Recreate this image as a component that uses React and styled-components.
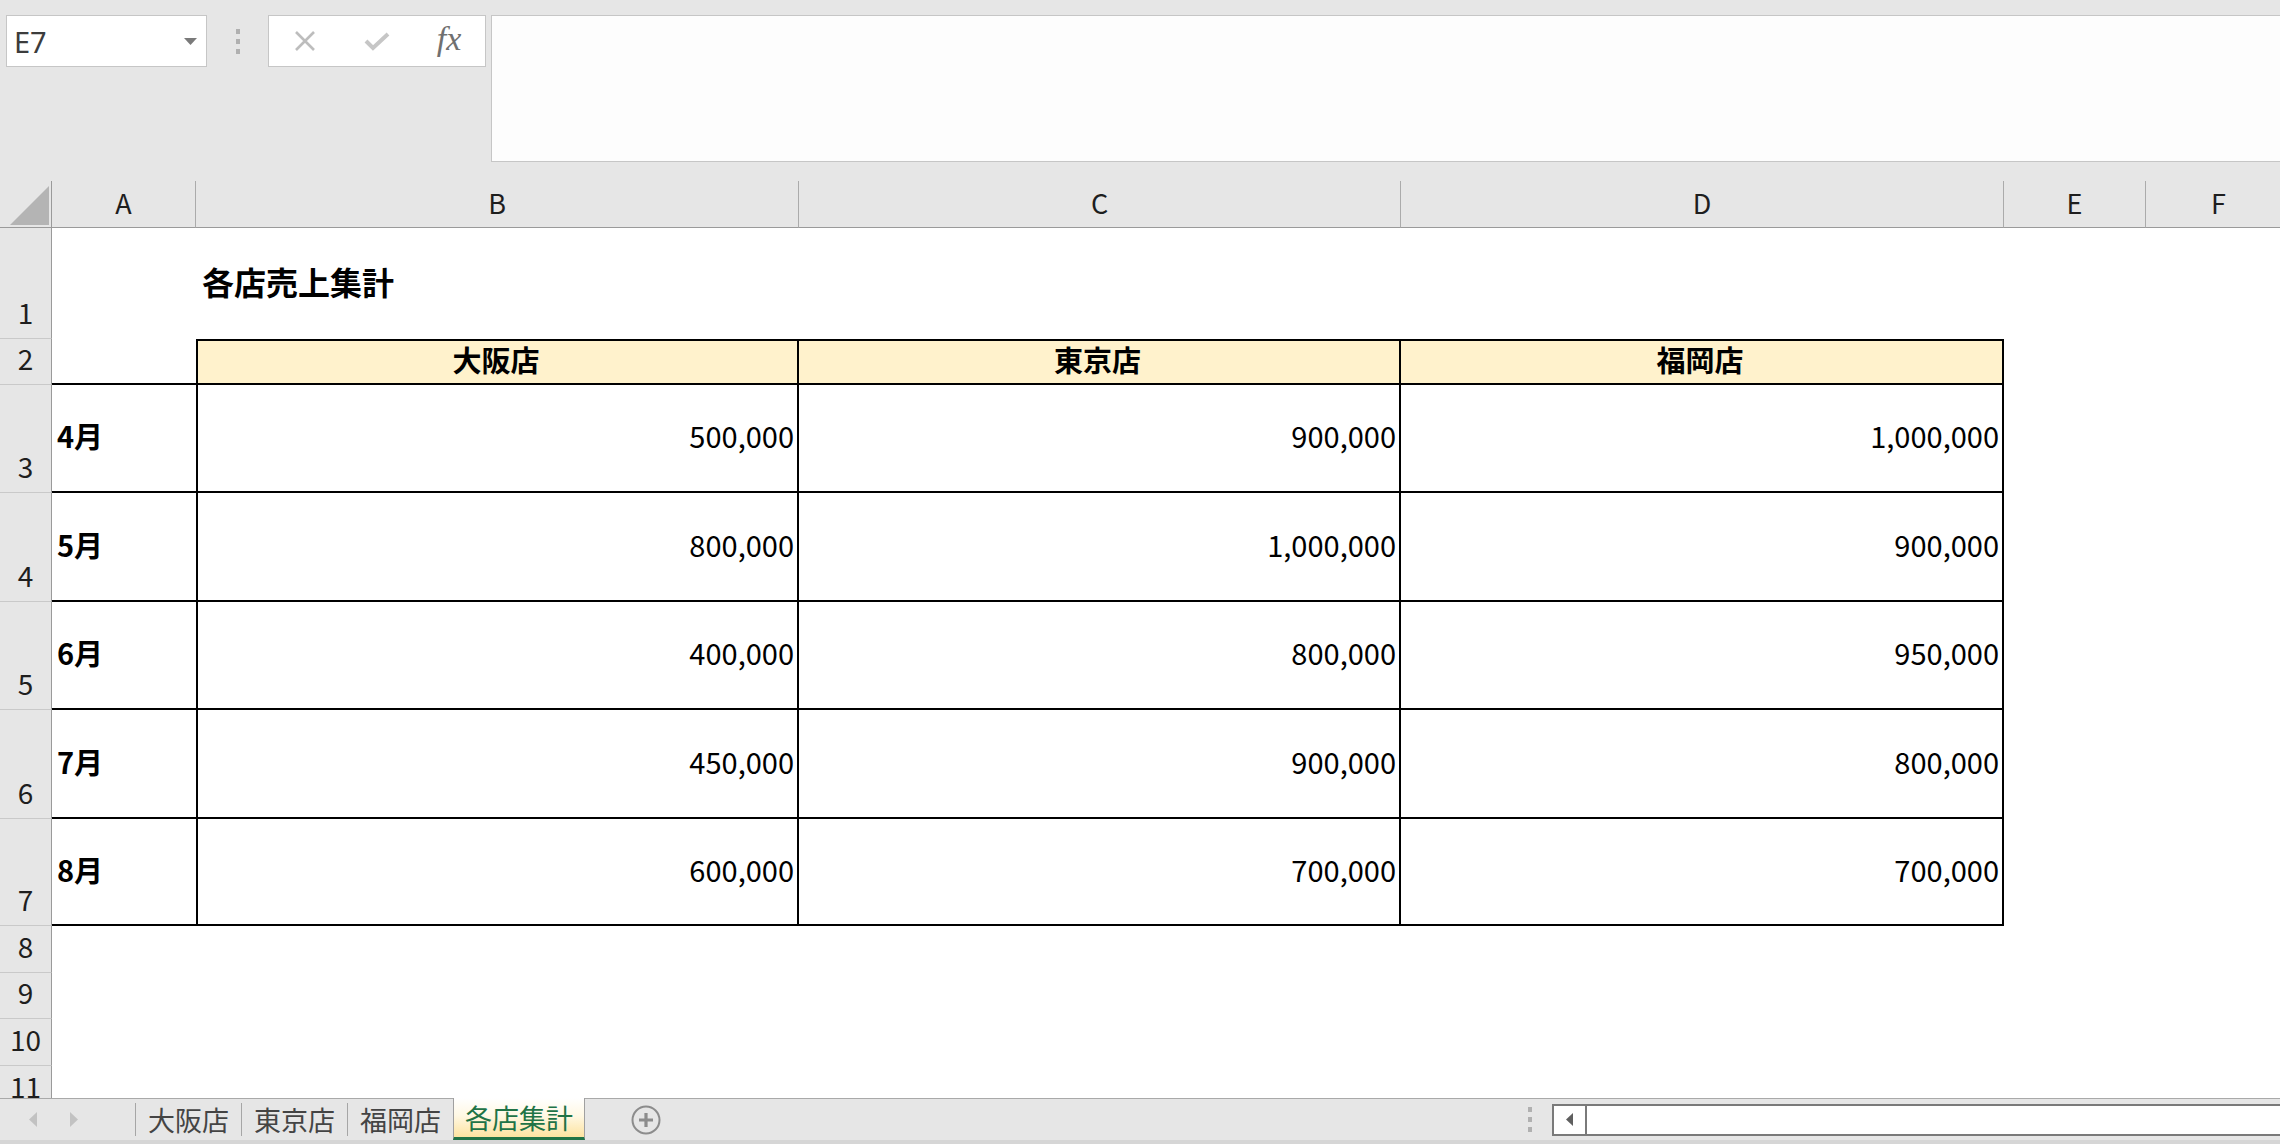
import React from "react";
import styled, { createGlobalStyle } from "styled-components";

const GlobalStyle = createGlobalStyle`
  html, body {
    margin: 0;
    padding: 0;
    background: #e6e6e6;
  }
  body {
    font-family: "Noto Sans CJK JP", "Noto Sans", sans-serif;
  }
`;

// column widths after the row header (A..F) and row heights (1..11)
const COLS = [144, 603, 602, 603, 142, 146];
const ROWS = [111, 46, 108, 109, 108, 109, 107, 47, 46, 47, 47];
const LETTERS = ["A", "B", "C", "D", "E", "F"];

const stores = ["大阪店", "東京店", "福岡店"];
const sales = [
  { month: "4月", values: ["500,000", "900,000", "1,000,000"] },
  { month: "5月", values: ["800,000", "1,000,000", "900,000"] },
  { month: "6月", values: ["400,000", "800,000", "950,000"] },
  { month: "7月", values: ["450,000", "900,000", "800,000"] },
  { month: "8月", values: ["600,000", "700,000", "700,000"] },
];
const sheets = ["大阪店", "東京店", "福岡店"];

const LINE = "2px solid #000";

const App = () => {
  const renderRow = (r) => {
    const cells = [];
    if (r === 1) {
      cells.push(<Cell key="a" />);
      cells.push(
        <Cell key="b" $bold $size={32} $padLeft={6}>
          各店売上集計
        </Cell>
      );
      for (let i = 0; i < 4; i++) cells.push(<Cell key={`e${i}`} />);
    } else if (r === 2) {
      cells.push(<Cell key="a" $b />);
      stores.forEach((s, i) => {
        cells.push(
          <Cell key={s} $fill="#fff2cc" $bold $align="center" $t $b $r $l={i === 0}>
            {s}
          </Cell>
        );
      });
      cells.push(<Cell key="e" />);
      cells.push(<Cell key="f" />);
    } else if (r >= 3 && r <= 7) {
      const row = sales[r - 3];
      cells.push(
        <Cell key="a" $bold $b $padLeft={5}>
          {row.month}
        </Cell>
      );
      row.values.forEach((v, i) => {
        cells.push(
          <Cell key={i} $align="right" $b $r $l={i === 0}>
            {v}
          </Cell>
        );
      });
      cells.push(<Cell key="e" />);
      cells.push(<Cell key="f" />);
    } else {
      for (let i = 0; i < 6; i++) cells.push(<Cell key={`x${i}`} />);
    }
    return [
      <RowHead key={`h${r}`}>{r}</RowHead>,
      ...cells.map((c, i) => React.cloneElement(c, { key: `${r}-${i}` })),
    ];
  };

  return (
    <Page>
      <GlobalStyle />
      <FormulaArea>
        <NameBox>
          <span>E7</span>
          <svg width="13" height="7" viewBox="0 0 13 7">
            <path d="M0 0 H13 L6.5 7 Z" fill="#7a7a7a" />
          </svg>
        </NameBox>
        <Grip>
          <Dot />
          <Dot />
          <Dot />
        </Grip>
        <FxButtons>
          <FxSlot>
            <svg width="24" height="20" viewBox="0 0 24 20">
              <path d="M3 1 L21 19 M21 1 L3 19" stroke="#bdbdbd" strokeWidth="2.6" />
            </svg>
          </FxSlot>
          <FxSlot>
            <svg width="26" height="20" viewBox="0 0 26 20">
              <path d="M2 10 L9 17 L24 3" stroke="#c6c6c6" strokeWidth="4" fill="none" />
            </svg>
          </FxSlot>
          <FxSlot>
            <FxText>fx</FxText>
          </FxSlot>
        </FxButtons>
        <FormulaInput />
      </FormulaArea>

      <Sheet>
        <Corner>
          <svg width="39" height="39" viewBox="0 0 39 39">
            <path d="M0 39 H39 V0 Z" fill="#b4b4b4" />
          </svg>
        </Corner>
        {LETTERS.map((l) => (
          <ColHead key={l}>{l}</ColHead>
        ))}
        {ROWS.map((_, i) => renderRow(i + 1))}
      </Sheet>

      <TabBar>
        <NavArrows>
          <svg width="8" height="15" viewBox="0 0 8 15">
            <path d="M8 0 V15 L0 7.5 Z" fill="#c2c2c2" />
          </svg>
          <svg width="8" height="15" viewBox="0 0 8 15">
            <path d="M0 0 V15 L8 7.5 Z" fill="#c2c2c2" />
          </svg>
        </NavArrows>
        {sheets.map((s) => (
          <React.Fragment key={s}>
            <TabDivider />
            <SheetTab>{s}</SheetTab>
          </React.Fragment>
        ))}
        <ActiveTab>各店集計</ActiveTab>
        <AddSheet>
          <svg width="30" height="30" viewBox="0 0 30 30">
            <circle cx="15" cy="15" r="13.5" stroke="#8c8c8c" strokeWidth="2" fill="none" />
            <path d="M15 8 V22 M8 15 H22" stroke="#8c8c8c" strokeWidth="3.2" />
          </svg>
        </AddSheet>
        <RightGroup>
          <Grip $small>
            <Dot />
            <Dot />
            <Dot />
          </Grip>
          <HScroll>
            <ScrollBtn>
              <svg width="7" height="13" viewBox="0 0 7 13">
                <path d="M7 0 V13 L0 6.5 Z" fill="#5f5f5f" />
              </svg>
            </ScrollBtn>
          </HScroll>
        </RightGroup>
      </TabBar>
    </Page>
  );
};

const Page = styled.div`
  width: 100vw;
  height: 100vh;
  overflow: hidden;
  display: flex;
  flex-direction: column;
  background: #e6e6e6;
  font-family: "Noto Sans CJK JP", "Noto Sans", sans-serif;
  color: #000;
`;

/* ---------- formula bar ---------- */
const FormulaArea = styled.div`
  flex: 0 0 181px;
  box-sizing: border-box;
  display: flex;
  align-items: flex-start;
  padding: 15px 0 0 6px;
`;

const NameBox = styled.div`
  flex: 0 0 201px;
  height: 52px;
  box-sizing: border-box;
  background: #fff;
  border: 1px solid #c6c6c6;
  display: flex;
  align-items: center;
  justify-content: space-between;
  padding: 0 9px 0 7px;
  font-family: "Noto Sans", sans-serif;
  font-size: 29px;
  color: #3c3c3c;
`;

const Grip = styled.div`
  flex: 0 0 ${(p) => (p.$small ? 20 : 61)}px;
  height: ${(p) => (p.$small ? 32 : 52)}px;
  display: flex;
  flex-direction: column;
  align-items: center;
  justify-content: center;
  gap: 5px;
`;

const Dot = styled.span`
  width: 4px;
  height: 5px;
  background: #b0b0b0;
`;

const FxButtons = styled.div`
  flex: 0 0 218px;
  height: 52px;
  box-sizing: border-box;
  background: #fff;
  border: 1px solid #c6c6c6;
  display: flex;
  align-items: center;
`;

const FxSlot = styled.div`
  flex: 0 0 72px;
  display: flex;
  align-items: center;
  justify-content: center;
`;

const FxText = styled.span`
  font-family: "Liberation Serif", serif;
  font-style: italic;
  font-size: 34px;
  line-height: 1;
  color: #707070;
  margin-top: -4px;
`;

const FormulaInput = styled.div`
  flex: 1;
  height: 147px;
  margin-left: 5px;
  margin-right: -4px;
  box-sizing: border-box;
  background: #fdfdfd;
  border: 1px solid #c6c6c6;
`;

/* ---------- sheet grid ---------- */
const Sheet = styled.div`
  flex: 1;
  min-height: 0;
  overflow: hidden;
  display: grid;
  grid-template-columns: 52px ${COLS.map((c) => `${c}px`).join(" ")};
  grid-template-rows: 47px ${ROWS.map((r) => `${r}px`).join(" ")};
  background: #fff;
`;

const Corner = styled.div`
  box-sizing: border-box;
  background: #e6e6e6;
  border-right: 1px solid #9a9a9a;
  border-bottom: 1px solid #9a9a9a;
  display: flex;
  align-items: flex-end;
  justify-content: flex-end;
  padding: 0 2px 2px 0;
`;

const ColHead = styled.div`
  box-sizing: border-box;
  background: #e6e6e6;
  border-right: 1px solid #ababab;
  border-bottom: 1px solid #9a9a9a;
  display: flex;
  align-items: center;
  justify-content: center;
  padding-bottom: 3px;
  font-size: 27px;
  color: #1e1e1e;
`;

const RowHead = styled.div`
  box-sizing: border-box;
  background: #e6e6e6;
  border-right: 1px solid #9a9a9a;
  border-bottom: 1px solid #c9c9c9;
  display: flex;
  align-items: flex-end;
  justify-content: center;
  padding-bottom: 3px;
  font-size: 28px;
  line-height: 46px;
  color: #1e1e1e;
  overflow: hidden;
`;

const Cell = styled.div`
  box-sizing: border-box;
  display: flex;
  align-items: center;
  justify-content: ${(p) =>
    p.$align === "right" ? "flex-end" : p.$align === "center" ? "center" : "flex-start"};
  padding: 0 3px 6px ${(p) => p.$padLeft || 0}px;
  background: ${(p) => p.$fill || "#fff"};
  border-top: ${(p) => (p.$t ? LINE : "none")};
  border-right: ${(p) => (p.$r ? LINE : "none")};
  border-bottom: ${(p) => (p.$b ? LINE : "none")};
  border-left: ${(p) => (p.$l ? LINE : "none")};
  font-size: ${(p) => p.$size || 29}px;
  font-weight: ${(p) => (p.$bold ? 700 : 400)};
  white-space: nowrap;
  overflow: hidden;
`;

/* ---------- sheet tabs & scroll ---------- */
const TabBar = styled.div`
  flex: 0 0 44px;
  box-sizing: border-box;
  display: flex;
  align-items: stretch;
  background: #e6e6e6;
  border-top: 1px solid #a9a9a9;
  border-bottom: 4px solid #d6d6d6;
`;

const NavArrows = styled.div`
  flex: 0 0 135px;
  box-sizing: border-box;
  display: flex;
  align-items: center;
  gap: 33px;
  padding-left: 29px;
`;

const TabDivider = styled.span`
  align-self: center;
  width: 1px;
  height: 33px;
  background: #a6a6a6;
`;

const SheetTab = styled.div`
  display: flex;
  align-items: center;
  padding: 0 12px;
  font-size: 27px;
  color: #444;
`;

const ActiveTab = styled.div`
  display: flex;
  align-items: center;
  box-sizing: border-box;
  margin-top: -1px;
  padding: 0 11px;
  font-size: 27px;
  color: #217346;
  background: linear-gradient(#ffffff 0%, #fff8e4 45%, #fde3a0 100%);
  border-left: 1px solid #a0a0a0;
  border-right: 1px solid #a0a0a0;
  border-bottom: 3px solid #217346;
`;

const AddSheet = styled.div`
  display: flex;
  align-items: center;
  margin-left: 46px;
`;

const RightGroup = styled.div`
  margin-left: auto;
  flex: 0 0 760px;
  display: flex;
  align-items: center;
  gap: 12px;
`;

const HScroll = styled.div`
  flex: 1;
  height: 32px;
  margin-right: -10px;
  box-sizing: border-box;
  background: #fff;
  border: 2px solid #7a7a7a;
  display: flex;
`;

const ScrollBtn = styled.div`
  flex: 0 0 31px;
  border-right: 2px solid #7a7a7a;
  display: flex;
  align-items: center;
  justify-content: center;
`;

export default App;
